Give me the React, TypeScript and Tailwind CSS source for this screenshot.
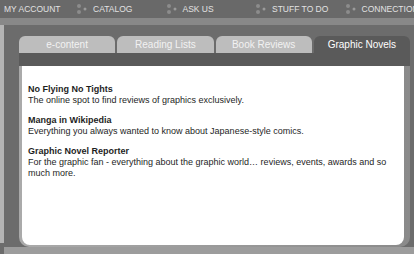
const navItems = ["CATALOG", "ASK US", "STUFF TO DO", "CONNECTIONS"]

const tabs = ["e-content", "Reading Lists", "Book Reviews", "Graphic Novels"]

const links = [
  { title: "No Flying No Tights", text: "The online spot to find reviews of graphics exclusively." },
  { title: "Manga in Wikipedia", text: "Everything you always wanted to know about Japanese-style comics." },
  {
    title: "Graphic Novel Reporter",
    text: "For the graphic fan - everything about the graphic world… reviews, events, awards and so much more.",
  },
]

function Dots() {
  return (
    <svg width="14" height="12" viewBox="0 0 14 12" className="shrink-0">
      <circle cx="3" cy="3" r="2" fill="#8c8c8c" />
      <circle cx="3" cy="9" r="2" fill="#8c8c8c" />
      <circle cx="9" cy="6" r="1.5" fill="#9a9a9a" />
    </svg>
  )
}

export default function App() {
  return (
    <div className="w-[414px] h-[254px] overflow-hidden bg-[#6c6c6c] font-['Liberation_Sans',Arial,sans-serif] flex flex-col">
      {/* Nav */}
      <div className="h-[18px] bg-[#696969] flex items-center pl-[4px] text-[8.5px] text-[#e2e2e2] whitespace-nowrap">
        <span className="w-[72px] shrink-0">MY ACCOUNT</span>
        {navItems.map((item) => (
          <div key={item} className="w-[89.5px] shrink-0 flex items-center gap-[3px]">
            <Dots />
            <span>{item}</span>
          </div>
        ))}
      </div>
      <div className="h-[7px] bg-[#888888]" />

      <div className="flex-1 flex">
        <div className="w-[4px] bg-[#b4b4b4] mb-[11px]" />
        <div className="flex-1 flex flex-col">
          <div className="flex-1 pl-[15px] pr-[4px] pt-[11px]">
            {/* Tabs */}
            <div className="flex gap-[2px] h-[17px] text-[10px]">
              {tabs.map((t, i) =>
                i === 3 ? (
                  <div
                    key={t}
                    className="flex-1 rounded-t-[6px] bg-[#5a5a5a] text-white flex items-center justify-center"
                  >
                    {t}
                  </div>
                ) : (
                  <div
                    key={t}
                    className="flex-1 rounded-t-[6px] bg-[#bdbdbd] text-[#f2f2f2] flex items-center justify-center"
                  >
                    {t}
                  </div>
                ),
              )}
            </div>
            <div className="h-[13px] bg-[#5a5a5a]" />
            {/* Content */}
            <div className="rounded-b-[10px] pl-[3px] pb-[2px] pr-[6px] bg-gradient-to-r from-[#aaaaaa] to-[#8a8a8a]">
              <div className="bg-white rounded-b-[8px] h-[179px] pl-[6px] pr-[8px] pt-[18px] text-[9px] leading-[11px] text-[#1e1e1e]">
                {links.map((l) => (
                  <div key={l.title} className="mb-[9px]">
                    <div className="font-bold">{l.title}</div>
                    <div>{l.text}</div>
                  </div>
                ))}
              </div>
            </div>
          </div>
          <div className="h-[7px] bg-[#9c9c9c]" />
        </div>
      </div>
    </div>
  )
}
